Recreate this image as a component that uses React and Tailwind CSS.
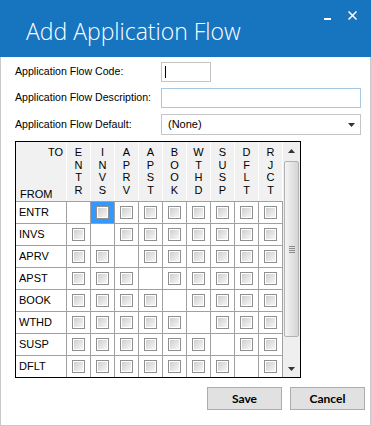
import React from "react";

const COLS = ["ENTR", "INVS", "APRV", "APST", "BOOK", "WTHD", "SUSP", "DFLT", "RJCT"];
const ROWS = ["ENTR", "INVS", "APRV", "APST", "BOOK", "WTHD", "SUSP", "DFLT"];

const CheckBox = () => (
  <div className="w-[13px] h-[13px] border border-[#8e8f8f] bg-white p-px">
    <div className="w-full h-full bg-linear-to-br from-[#cfcfcf] to-[#f6f6f6]" />
  </div>
);

const Arrow = ({ down }) => (
  <svg width="7" height="4" viewBox="0 0 7 4">
    <path d={down ? "M0 0h7L3.5 4z" : "M0 4h7L3.5 0z"} fill="#333" />
  </svg>
);

export default function App() {
  return (
    <div
      className="w-[371px] h-[426px] bg-white flex flex-col text-black"
      style={{ fontFamily: '"Liberation Sans", Arial, sans-serif' }}
    >
      {/* Title bar */}
      <div className="h-[57px] bg-[#1774bf] flex justify-between shrink-0">
        <div
          className="pl-[26px] pt-[16px] text-[23px] leading-[30px] font-light text-white"
          style={{ fontFamily: '"Open Sans", sans-serif' }}
        >
          Add Application Flow
        </div>
        <div className="flex items-start pt-[11px] pr-[14px] gap-[17px]">
          <div className="mt-[7px] w-[7px] h-[2px] bg-white" />
          <svg width="9" height="9" viewBox="0 0 9 9">
            <path d="M0.5 0.5L8.5 8.5M8.5 0.5L0.5 8.5" stroke="white" strokeWidth="1.5" />
          </svg>
        </div>
      </div>

      {/* Body */}
      <div className="flex-1 border-x border-b border-[#c9c9c9] flex flex-col pl-[14px] pt-[5px] text-[10.6px]">
        <div className="flex flex-col gap-[6px]">
          <div className="flex items-center h-[20px]">
            <div className="w-[146px]">Application Flow Code:</div>
            <div className="w-[50px] h-[20px] border border-[#c5c5c5] flex items-center pl-[3px]">
              <div className="w-px h-[12px] bg-black" />
            </div>
          </div>
          <div className="flex items-center h-[20px]">
            <div className="w-[146px]">Application Flow Description:</div>
            <div className="w-[200px] h-[20px] border border-[#a7c7e2]" />
          </div>
          <div className="flex items-center h-[21px]">
            <div className="w-[146px]">Application Flow Default:</div>
            <div className="w-[200px] h-[21px] border border-[#c5c5c5] flex items-center justify-between pl-[6px] pr-[5px]">
              <span className="text-[11px]">(None)</span>
              <Arrow down />
            </div>
          </div>
        </div>

        {/* Grid */}
        <div className="mt-[6px] w-[286px] border border-black flex text-[11px]">
          <div className="flex flex-col">
            <div className="flex h-[60px] border-b border-[#a0a0a0] bg-[#f1f1f1]">
              <div className="w-[51px] border-r border-white flex flex-col justify-between pt-[4px] leading-[12.5px]">
                <div className="text-right pr-[3px]">TO</div>
                <div className="pl-[4px] pb-[1px]">FROM</div>
              </div>
              {COLS.map((c) => (
                <div key={c} className="w-[24px] border-r border-white flex flex-col items-center pt-[4px] leading-[12.5px]">
                  {c.split("").map((ch, i) => (
                    <div key={i}>{ch}</div>
                  ))}
                </div>
              ))}
            </div>
            {ROWS.map((r, ri) => (
              <div
                key={r}
                className={`flex ${ri === ROWS.length - 1 ? "h-[21px]" : "h-[22px] border-b border-[#a0a0a0]"}`}
              >
                <div className="w-[51px] border-r border-[#a0a0a0] flex items-center pl-[3px]">{r}</div>
                {COLS.map((c, ci) => (
                  <div
                    key={c}
                    className={`w-[24px] border-r border-[#a0a0a0] flex items-center justify-center ${
                      ri === 0 && ci === 1 ? "bg-[#3399ff]" : "bg-white"
                    }`}
                  >
                    {ci !== ri && <CheckBox />}
                  </div>
                ))}
              </div>
            ))}
          </div>

          {/* Scrollbar */}
          <div className="w-[17px] bg-[#efefef] flex flex-col">
            <div className="h-[17px] flex items-center justify-center">
              <Arrow />
            </div>
            <div className="mt-[2px] mx-px h-[176px] rounded-[2px] border border-[#b3b3b3] bg-linear-to-r from-[#f4f4f4] to-[#d5d5d5] flex items-center justify-center">
              <div className="flex flex-col gap-px">
                <div className="w-[6px] h-px bg-[#8a8a8a]" />
                <div className="w-[6px] h-px bg-[#8a8a8a]" />
                <div className="w-[6px] h-px bg-[#8a8a8a]" />
                <div className="w-[6px] h-px bg-[#8a8a8a]" />
              </div>
            </div>
            <div className="flex-1" />
            <div className="h-[17px] flex items-center justify-center">
              <Arrow down />
            </div>
          </div>
        </div>

        {/* Buttons */}
        <div className="mt-[9px] flex justify-end gap-[8px] pr-[5px]" style={{ fontFamily: "Lato, sans-serif" }}>
          <button className="w-[75px] h-[23px] bg-[#e1e1e1] border border-[#adadad] text-[12px] font-bold">Save</button>
          <button className="w-[75px] h-[23px] bg-[#e1e1e1] border border-[#adadad] text-[12px] font-bold">Cancel</button>
        </div>
      </div>
    </div>
  );
}
